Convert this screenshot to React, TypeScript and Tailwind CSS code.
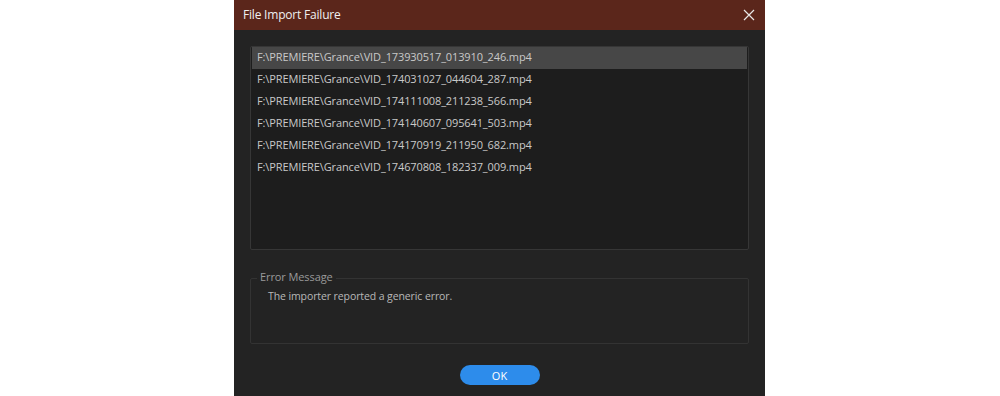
import React from "react";

const files = [
  "F:\\PREMIERE\\Grance\\VID_173930517_013910_246.mp4",
  "F:\\PREMIERE\\Grance\\VID_174031027_044604_287.mp4",
  "F:\\PREMIERE\\Grance\\VID_174111008_211238_566.mp4",
  "F:\\PREMIERE\\Grance\\VID_174140607_095641_503.mp4",
  "F:\\PREMIERE\\Grance\\VID_174170919_211950_682.mp4",
  "F:\\PREMIERE\\Grance\\VID_174670808_182337_009.mp4",
];

export default function App() {
  return (
    <div
      className="w-[1000px] h-[396px] bg-white flex justify-center"
      style={{ fontFamily: '"Open Sans", "Noto Sans", sans-serif' }}
    >
      <div className="w-[531px] h-[396px] ml-[-1px] bg-[#232323] flex flex-col">
        <div className="h-[30px] bg-[#5b261b] flex items-center justify-between pl-[9px] pr-[10px]">
          <span className="text-[12px] tracking-[-0.2px] text-[#f0f0f0] leading-none">File Import Failure</span>
          <svg width="12" height="12" viewBox="0 0 12 12">
            <path d="M1 1L11 11M11 1L1 11" stroke="#e8e8e8" strokeWidth="1.2" />
          </svg>
        </div>
        <div className="flex flex-col px-[16px] pt-[16px]">
          <div className="h-[204px] bg-[#1d1d1d] border border-[#363636] rounded-[2px] px-px flex flex-col">
            {files.map((f, i) => (
              <div
                key={f}
                className={`h-[22px] flex items-center pl-[5px] pb-[3px] text-[11px] tracking-[-0.12px] text-[#c9c9c9] leading-none ${
                  i === 0 ? "bg-[#474747]" : ""
                }`}
              >
                {f}
              </div>
            ))}
          </div>
          <div className="relative mt-[28px] h-[66px] border border-[#333333] rounded-[2px]">
            <span className="absolute left-[6px] top-[-8px] bg-[#232323] px-[3px] text-[11px] tracking-[-0.1px] text-[#9a9a9a] leading-none">
              Error Message
            </span>
            <div className="pl-[17px] pt-[12px] text-[10.5px] tracking-[-0.1px] text-[#b8b8b8] leading-none">
              The importer reported a generic error.
            </div>
          </div>
          <div className="flex justify-center mt-[21px]">
            <button className="w-[80px] h-[20px] rounded-full bg-[#2d8ceb] text-white text-[11px] leading-none flex items-center justify-center">
              OK
            </button>
          </div>
        </div>
      </div>
    </div>
  );
}
